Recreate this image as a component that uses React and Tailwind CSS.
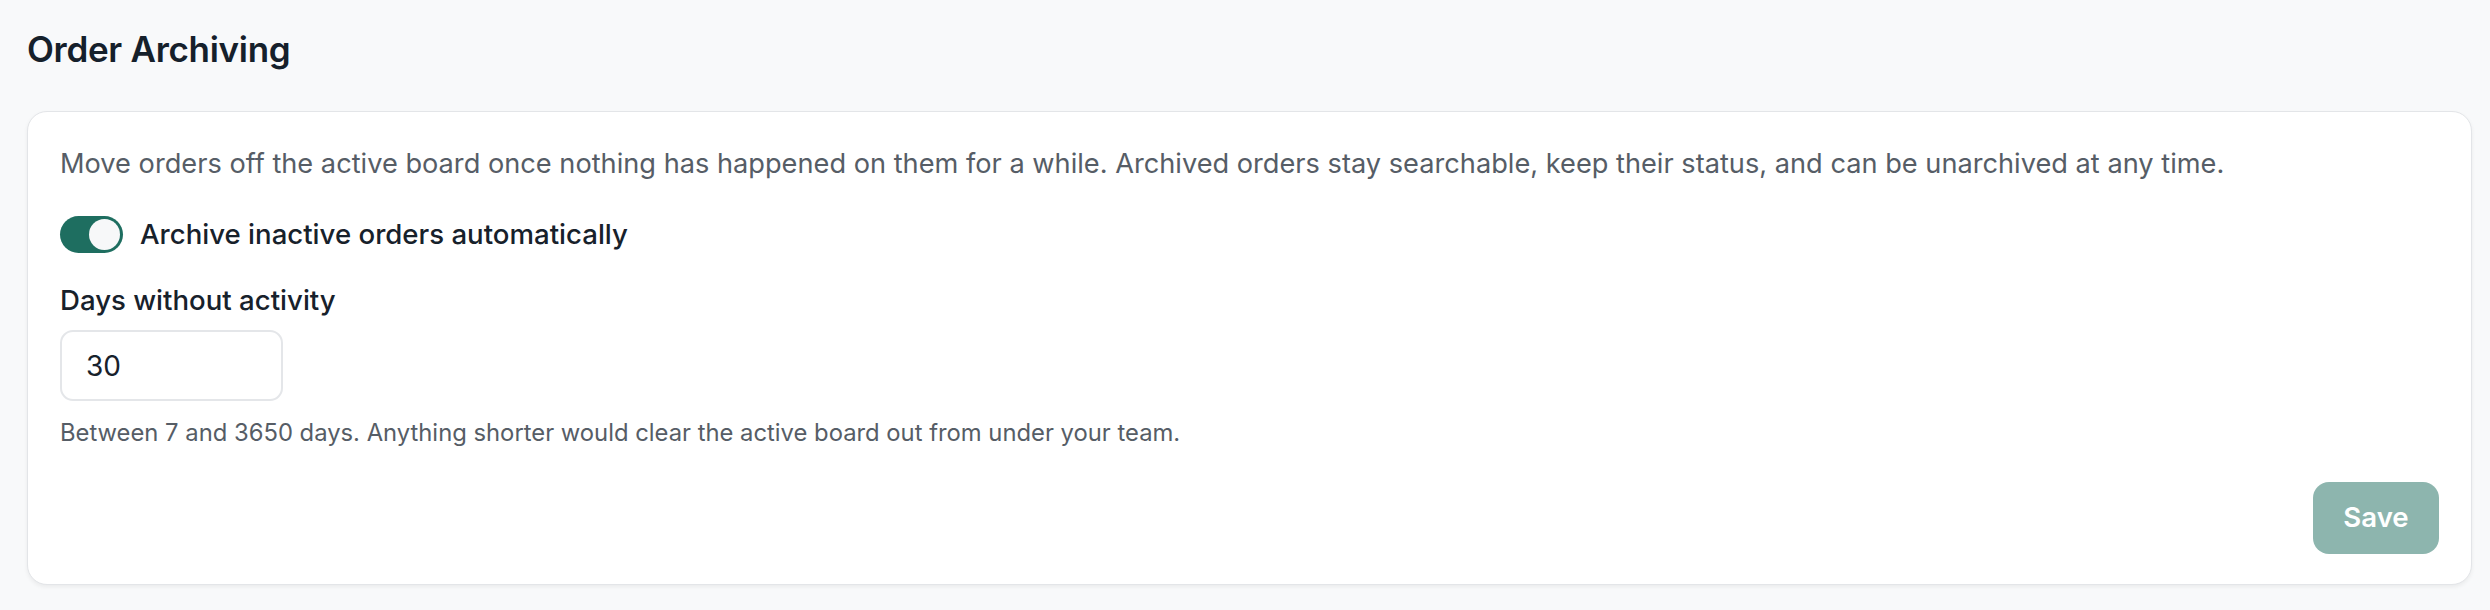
export default function App() {
  return (
    <div className="min-h-[610px] w-full bg-[#f8f9fa] pl-[27px] pr-[18px] pt-[28px] pb-[26px]" style={{ fontFamily: 'Inter, "Noto Sans", sans-serif' }}>
      <h1 className="text-[35px] leading-[42px] font-semibold text-[#15202b] tracking-[-0.3px]">Order Archiving</h1>
      <div className="mt-[41px] rounded-[20px] border border-[#e3e5e8] bg-white px-[32px] pt-[32px] pb-[30px] shadow-[0_2px_4px_rgba(0,0,0,0.06)]">
        <p className="text-[27.2px] leading-[40px] text-[#565d66]">
          Move orders off the active board once nothing has happened on them for a while. Archived orders stay searchable, keep their status, and can be unarchived at any time.
        </p>
        <div className="mt-[31px] flex items-center gap-[17px]">
          <button type="button" className="relative flex h-[37px] w-[63px] shrink-0 items-center rounded-full bg-[#1e6e60] px-[3px]">
            <span className="ml-auto block h-[31px] w-[31px] rounded-full bg-[#f7f8f9]" />
          </button>
          <span className="text-[27.6px] leading-[38px] font-medium text-[#17212b]">Archive inactive orders automatically</span>
        </div>
        <div className="mt-[28px] text-[27.6px] leading-[38px] font-medium text-[#17212b]">Days without activity</div>
        <div className="mt-[11px] flex h-[71px] w-[223px] items-center rounded-[13px] border-2 border-[#e4e6e9] bg-white pl-[24px] text-[28px] text-[#17212b]">
          30
        </div>
        <p className="mt-[16px] text-[23.8px] leading-[32px] text-[#565d66]">
          Between 7 and 3650 days. Anything shorter would clear the active board out from under your team.
        </p>
        <div className="mt-[33px] flex justify-end">
          <button type="button" className="flex h-[72px] w-[126px] items-center justify-center rounded-[16px] bg-[#1e6e60] text-[27.6px] font-semibold text-white opacity-50">
            Save
          </button>
        </div>
      </div>
    </div>
  );
}
